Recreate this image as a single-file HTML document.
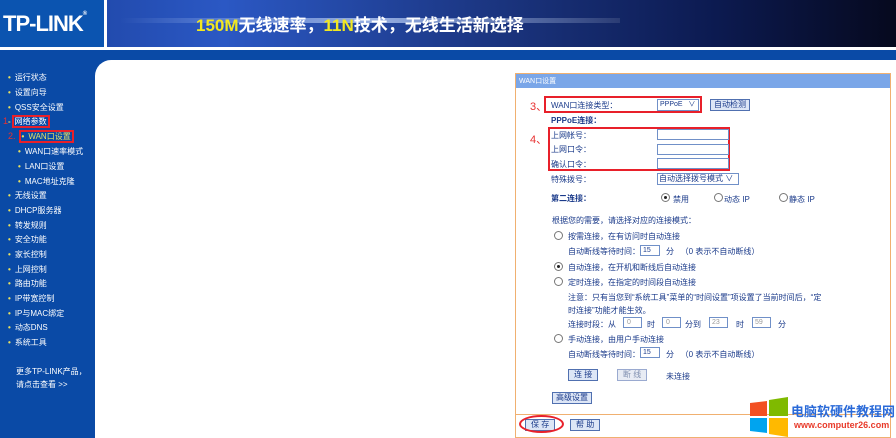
<!DOCTYPE html>
<html><head><meta charset="utf-8"><style>
*{margin:0;padding:0;box-sizing:border-box}
body{width:896px;height:438px;overflow:hidden;background:#0a4aa6;font-family:"Liberation Sans","Noto Sans CJK SC",sans-serif;position:relative}
.a{position:absolute;white-space:nowrap}
#hd{left:0;top:0;width:896px;height:47px;background:linear-gradient(90deg,#1a3f9a 0%,#2b58c4 25%,#1b3580 55%,#0c1a50 80%,#06091e 100%)}
#logo{left:0;top:0;width:104px;height:47px;background:#0b54b0;color:#fff;font:bold 22px "Liberation Sans",sans-serif;padding:11px 0 0 3px;letter-spacing:-1px}
#sep{left:104px;top:0;width:3px;height:47px;background:#fff}
#wl{left:0;top:47px;width:896px;height:3px;background:#fff}
#main{left:95px;top:60px;width:801px;height:378px;background:#fff;border-top-left-radius:16px}
.nav{color:#fff;font-size:8px;left:8px}
.nav b{color:#e8e060;font-size:8px;margin-right:4px}
.pn{left:515px;top:73px;width:376px;height:365px;border:1px solid #f0b070;background:#fff}
.ph{left:516px;top:74px;width:374px;height:14px;background:#7aa6e8;color:#fff;font-size:7px;padding:2px 3px}
.t{color:#1a3a8a;font-size:8px}
.box{border:1px solid #7090c8;background:#fff;height:11px;line-height:9px}
.btn{border:1px solid #5070b0;background:#dde6f6;color:#1a3a8a;font-size:8px;height:12px;padding:0 3px;line-height:10px}
.red{border:2px solid #e8202a}
.rd{width:9px;height:9px;border:1px solid #777;border-radius:50%;background:#fff}
.rd.on::after{content:"";position:absolute;left:2px;top:2px;width:3px;height:3px;border-radius:50%;background:#222}
.rn{color:#e83030;font-size:11px}
</style></head><body>
<div class="a" id="hd"></div>
<div class="a" style="left:120px;top:18px;width:500px;height:5px;background:linear-gradient(90deg,rgba(255,255,255,0),rgba(200,220,255,0.7),rgba(255,255,255,0.1))"></div>
<div class="a" id="logo">TP-LINK<span style="font-size:6px;vertical-align:top">®</span></div>
<div class="a" id="sep"></div>
<div class="a" style="left:196px;top:11px;font-size:17px;font-weight:bold;color:#fff"><span style="color:#f2e820">150M</span>无线速率，<span style="color:#f2e820">11N</span>技术，无线生活新选择</div>
<div class="a" id="wl"></div>
<div class="a" id="main"></div>

<div class="a nav" style="top:72px"><b>•</b>运行状态</div>
<div class="a nav" style="top:87px"><b>•</b>设置向导</div>
<div class="a nav" style="top:102px"><b>•</b>QSS安全设置</div>
<div class="a nav" style="top:116px;left:3px"><span class="rn" style="font-size:9px">1</span></div>
<div class="a nav" style="top:116px;left:8px"><b style="margin-right:1px">-</b><span class="red" style="padding:0 1px">网络参数</span></div>
<div class="a nav" style="top:131px;left:8px"><span class="rn" style="font-size:9px">2.</span><span class="red" style="margin-left:3px;padding:0 1px"><b>•</b><span style="color:#e8e060">WAN口设置</span></span></div>
<div class="a nav" style="top:146px;left:18px"><b>•</b>WAN口速率模式</div>
<div class="a nav" style="top:161px;left:18px"><b>•</b>LAN口设置</div>
<div class="a nav" style="top:176px;left:18px"><b>•</b>MAC地址克隆</div>
<div class="a nav" style="top:190px"><b>•</b>无线设置</div>
<div class="a nav" style="top:205px"><b>•</b>DHCP服务器</div>
<div class="a nav" style="top:220px"><b>•</b>转发规则</div>
<div class="a nav" style="top:234px"><b>•</b>安全功能</div>
<div class="a nav" style="top:249px"><b>•</b>家长控制</div>
<div class="a nav" style="top:264px"><b>•</b>上网控制</div>
<div class="a nav" style="top:278px"><b>•</b>路由功能</div>
<div class="a nav" style="top:293px"><b>•</b>IP带宽控制</div>
<div class="a nav" style="top:308px"><b>•</b>IP与MAC绑定</div>
<div class="a nav" style="top:322px"><b>•</b>动态DNS</div>
<div class="a nav" style="top:337px"><b>•</b>系统工具</div>
<div class="a nav" style="top:366px;left:16px">更多TP-LINK产品，</div>
<div class="a nav" style="top:379px;left:16px">请点击查看 &gt;&gt;</div>

<div class="a pn"></div>
<div class="a ph">WAN口设置</div>
<div class="a rn" style="left:530px;top:98px">3、</div>
<div class="a red" style="left:544px;top:96px;width:158px;height:17px"></div>
<div class="a t" style="left:551px;top:100px">WAN口连接类型：</div>
<div class="a box t" style="left:657px;top:99px;width:42px;height:12px;font-size:7px;padding-left:2px;line-height:10px">PPPoE &nbsp;&nbsp;∨</div>
<div class="a btn" style="left:710px;top:99px">自动检测</div>
<div class="a t" style="left:551px;top:115px;font-weight:bold">PPPoE连接：</div>
<div class="a rn" style="left:530px;top:131px">4、</div>
<div class="a red" style="left:548px;top:127px;width:182px;height:44px"></div>
<div class="a t" style="left:551px;top:130px">上网帐号：</div>
<div class="a box" style="left:657px;top:129px;width:72px"></div>
<div class="a t" style="left:551px;top:144px">上网口令：</div>
<div class="a box" style="left:657px;top:144px;width:72px"></div>
<div class="a t" style="left:551px;top:159px">确认口令：</div>
<div class="a box" style="left:657px;top:158px;width:72px"></div>
<div class="a t" style="left:551px;top:174px">特殊拨号：</div>
<div class="a box t" style="left:657px;top:173px;width:82px;height:12px;padding-left:1px;line-height:10px">自动选择拨号模式 ∨</div>
<div class="a t" style="left:551px;top:193px;font-weight:bold">第二连接：</div>
<div class="a rd on" style="left:661px;top:193px"></div><div class="a t" style="left:673px;top:194px">禁用</div>
<div class="a rd" style="left:714px;top:193px"></div><div class="a t" style="left:724px;top:194px">动态 IP</div>
<div class="a rd" style="left:779px;top:193px"></div><div class="a t" style="left:789px;top:194px">静态 IP</div>
<div class="a t" style="left:552px;top:215px">根据您的需要，请选择对应的连接模式：</div>
<div class="a rd" style="left:554px;top:231px"></div><div class="a t" style="left:568px;top:231px">按需连接，在有访问时自动连接</div>
<div class="a t" style="left:568px;top:246px">自动断线等待时间：</div>
<div class="a box t" style="left:640px;top:245px;width:20px;font-size:7px;padding-left:2px">15</div>
<div class="a t" style="left:666px;top:246px">分 &nbsp;&nbsp;（0 表示不自动断线）</div>
<div class="a rd on" style="left:554px;top:262px"></div><div class="a t" style="left:568px;top:262px">自动连接，在开机和断线后自动连接</div>
<div class="a rd" style="left:554px;top:277px"></div><div class="a t" style="left:568px;top:277px">定时连接，在指定的时间段自动连接</div>
<div class="a t" style="left:568px;top:292px">注意：只有当您到“系统工具”菜单的“时间设置”项设置了当前时间后，“定</div>
<div class="a t" style="left:568px;top:305px">时连接”功能才能生效。</div>
<div class="a t" style="left:568px;top:319px">连接时段：从</div>
<div class="a box t" style="left:623px;top:317px;width:19px;font-size:7px;color:#999;padding-left:3px">0</div>
<div class="a t" style="left:647px;top:319px">时</div>
<div class="a box t" style="left:662px;top:317px;width:19px;font-size:7px;color:#999;padding-left:3px">0</div>
<div class="a t" style="left:685px;top:319px">分到</div>
<div class="a box t" style="left:709px;top:317px;width:19px;font-size:7px;color:#999;padding-left:2px">23</div>
<div class="a t" style="left:736px;top:319px">时</div>
<div class="a box t" style="left:752px;top:317px;width:19px;font-size:7px;color:#999;padding-left:2px">59</div>
<div class="a t" style="left:778px;top:319px">分</div>
<div class="a rd" style="left:554px;top:334px"></div><div class="a t" style="left:568px;top:334px">手动连接，由用户手动连接</div>
<div class="a t" style="left:568px;top:349px">自动断线等待时间：</div>
<div class="a box t" style="left:640px;top:347px;width:20px;font-size:7px;padding-left:2px">15</div>
<div class="a t" style="left:666px;top:349px">分 &nbsp;&nbsp;（0 表示不自动断线）</div>
<div class="a btn" style="left:568px;top:369px;padding:0 5px">连 接</div>
<div class="a btn" style="left:617px;top:369px;padding:0 5px;color:#8090b0;background:#e8ecf4;border-color:#9aaad0">断 线</div>
<div class="a t" style="left:666px;top:371px">未连接</div>
<div class="a btn" style="left:552px;top:392px">高级设置</div>
<div class="a" style="left:516px;top:414px;width:374px;height:1px;background:#f0b070"></div>
<div class="a btn" style="left:525px;top:419px;padding:0 5px">保 存</div>
<div class="a" style="left:519px;top:415px;width:45px;height:18px;border:2px solid #e8202a;border-radius:50%"></div>
<div class="a btn" style="left:570px;top:419px;padding:0 5px">帮 助</div>

<svg class="a" style="left:750px;top:397px" width="40" height="40" viewBox="0 0 40 40">
<polygon points="0,6 17,4 17,19 0,19" fill="#f25022"/>
<polygon points="19,3 38,0 38,19 19,19" fill="#7fba00"/>
<polygon points="0,21 17,21 17,36 0,34" fill="#00a4ef"/>
<polygon points="19,21 38,21 38,40 19,37" fill="#ffb900"/>
</svg>
<div class="a" style="left:791px;top:401px;font-size:13px;font-weight:bold;color:#2a6ad8">电脑软硬件教程网</div>
<div class="a" style="left:794px;top:420px;font-size:9px;font-weight:bold;color:#e83a2a">www.computer26.com</div>
</body></html>
